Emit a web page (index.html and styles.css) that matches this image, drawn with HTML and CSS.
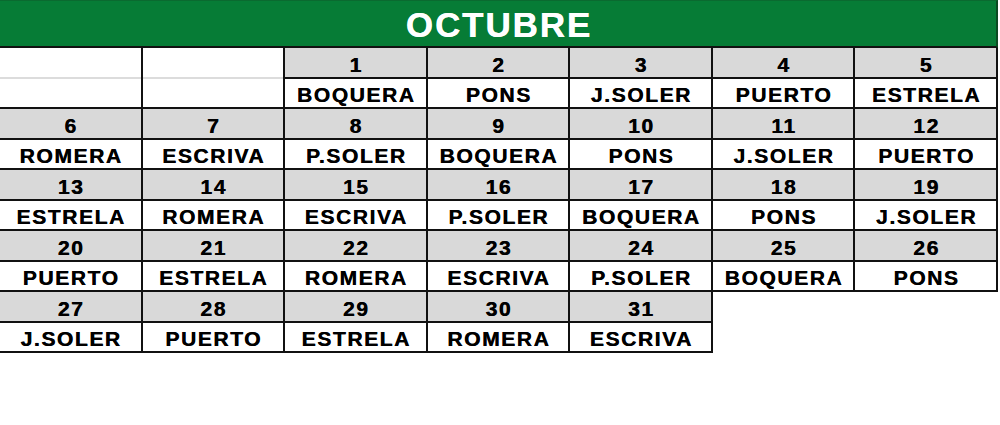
FILE: index.html
```html
<!DOCTYPE html>
<html lang="es">
<head>
<meta charset="utf-8">
<title>Octubre</title>
<link rel="stylesheet" href="styles.css">
</head>
<body>
<div class="cal">
  <div class="title">OCTUBRE</div>
  <div class="grid">
    <div class="day blank"><div class="num"></div><div class="name"></div></div>
    <div class="day blank"><div class="num"></div><div class="name"></div></div>
    <div class="day"><div class="num">1</div><div class="name">BOQUERA</div></div>
    <div class="day"><div class="num">2</div><div class="name">PONS</div></div>
    <div class="day"><div class="num">3</div><div class="name">J.SOLER</div></div>
    <div class="day"><div class="num">4</div><div class="name">PUERTO</div></div>
    <div class="day"><div class="num">5</div><div class="name">ESTRELA</div></div>

    <div class="day"><div class="num">6</div><div class="name">ROMERA</div></div>
    <div class="day"><div class="num">7</div><div class="name">ESCRIVA</div></div>
    <div class="day"><div class="num">8</div><div class="name">P.SOLER</div></div>
    <div class="day"><div class="num">9</div><div class="name">BOQUERA</div></div>
    <div class="day"><div class="num">10</div><div class="name">PONS</div></div>
    <div class="day"><div class="num">11</div><div class="name">J.SOLER</div></div>
    <div class="day"><div class="num">12</div><div class="name">PUERTO</div></div>

    <div class="day"><div class="num">13</div><div class="name">ESTRELA</div></div>
    <div class="day"><div class="num">14</div><div class="name">ROMERA</div></div>
    <div class="day"><div class="num">15</div><div class="name">ESCRIVA</div></div>
    <div class="day"><div class="num">16</div><div class="name">P.SOLER</div></div>
    <div class="day"><div class="num">17</div><div class="name">BOQUERA</div></div>
    <div class="day"><div class="num">18</div><div class="name">PONS</div></div>
    <div class="day"><div class="num">19</div><div class="name">J.SOLER</div></div>

    <div class="day"><div class="num">20</div><div class="name">PUERTO</div></div>
    <div class="day"><div class="num">21</div><div class="name">ESTRELA</div></div>
    <div class="day"><div class="num">22</div><div class="name">ROMERA</div></div>
    <div class="day"><div class="num">23</div><div class="name">ESCRIVA</div></div>
    <div class="day"><div class="num">24</div><div class="name">P.SOLER</div></div>
    <div class="day"><div class="num">25</div><div class="name">BOQUERA</div></div>
    <div class="day"><div class="num">26</div><div class="name">PONS</div></div>

    <div class="day"><div class="num">27</div><div class="name">J.SOLER</div></div>
    <div class="day"><div class="num">28</div><div class="name">PUERTO</div></div>
    <div class="day"><div class="num">29</div><div class="name">ESTRELA</div></div>
    <div class="day"><div class="num">30</div><div class="name">ROMERA</div></div>
    <div class="day"><div class="num">31</div><div class="name">ESCRIVA</div></div>
  </div>
</div>
</body>
</html>
```

FILE: styles.css
```css
html, body {
  margin: 0;
  padding: 0;
  background: #ffffff;
}

.cal {
  width: 998px;
  font-family: "Liberation Sans", Arial, sans-serif;
  font-weight: bold;
  color: #000;
}

.title {
  box-sizing: border-box;
  height: 48px;
  background: #067c36;
  border-top: 1px solid #0a6a30;
  border-right: 2px solid #0b4a22;
  border-bottom: 2px solid #111;
  color: #ffffff;
  font-size: 35px;
  letter-spacing: 1.9px;
  text-indent: 1.9px;
  text-align: center;
  line-height: 48px;
  text-shadow: 0.3px 0 0 #ffffff;
}

.grid {
  display: grid;
  grid-template-columns: repeat(7, 1fr);
}

.day {
  display: flex;
  flex-direction: column;
  border-right: 2px solid #111;
  border-bottom: 2px solid #111;
}

.num,
.name {
  box-sizing: border-box;
  display: flex;
  align-items: center;
  justify-content: center;
  font-size: 21px;
  letter-spacing: 1.6px;
  text-indent: 1.6px;
  text-shadow: 0.4px 0 0 #000;
}

.num {
  height: 31px;
  padding-top: 5px;
  background: #d9d9d9;
  border-bottom: 2px solid #111;
}

.name {
  height: 28px;
  padding-top: 4px;
  background: #ffffff;
}

.day.blank .num {
  background: #ffffff;
  border-bottom: 2px solid #dcdcdc;
}
```
